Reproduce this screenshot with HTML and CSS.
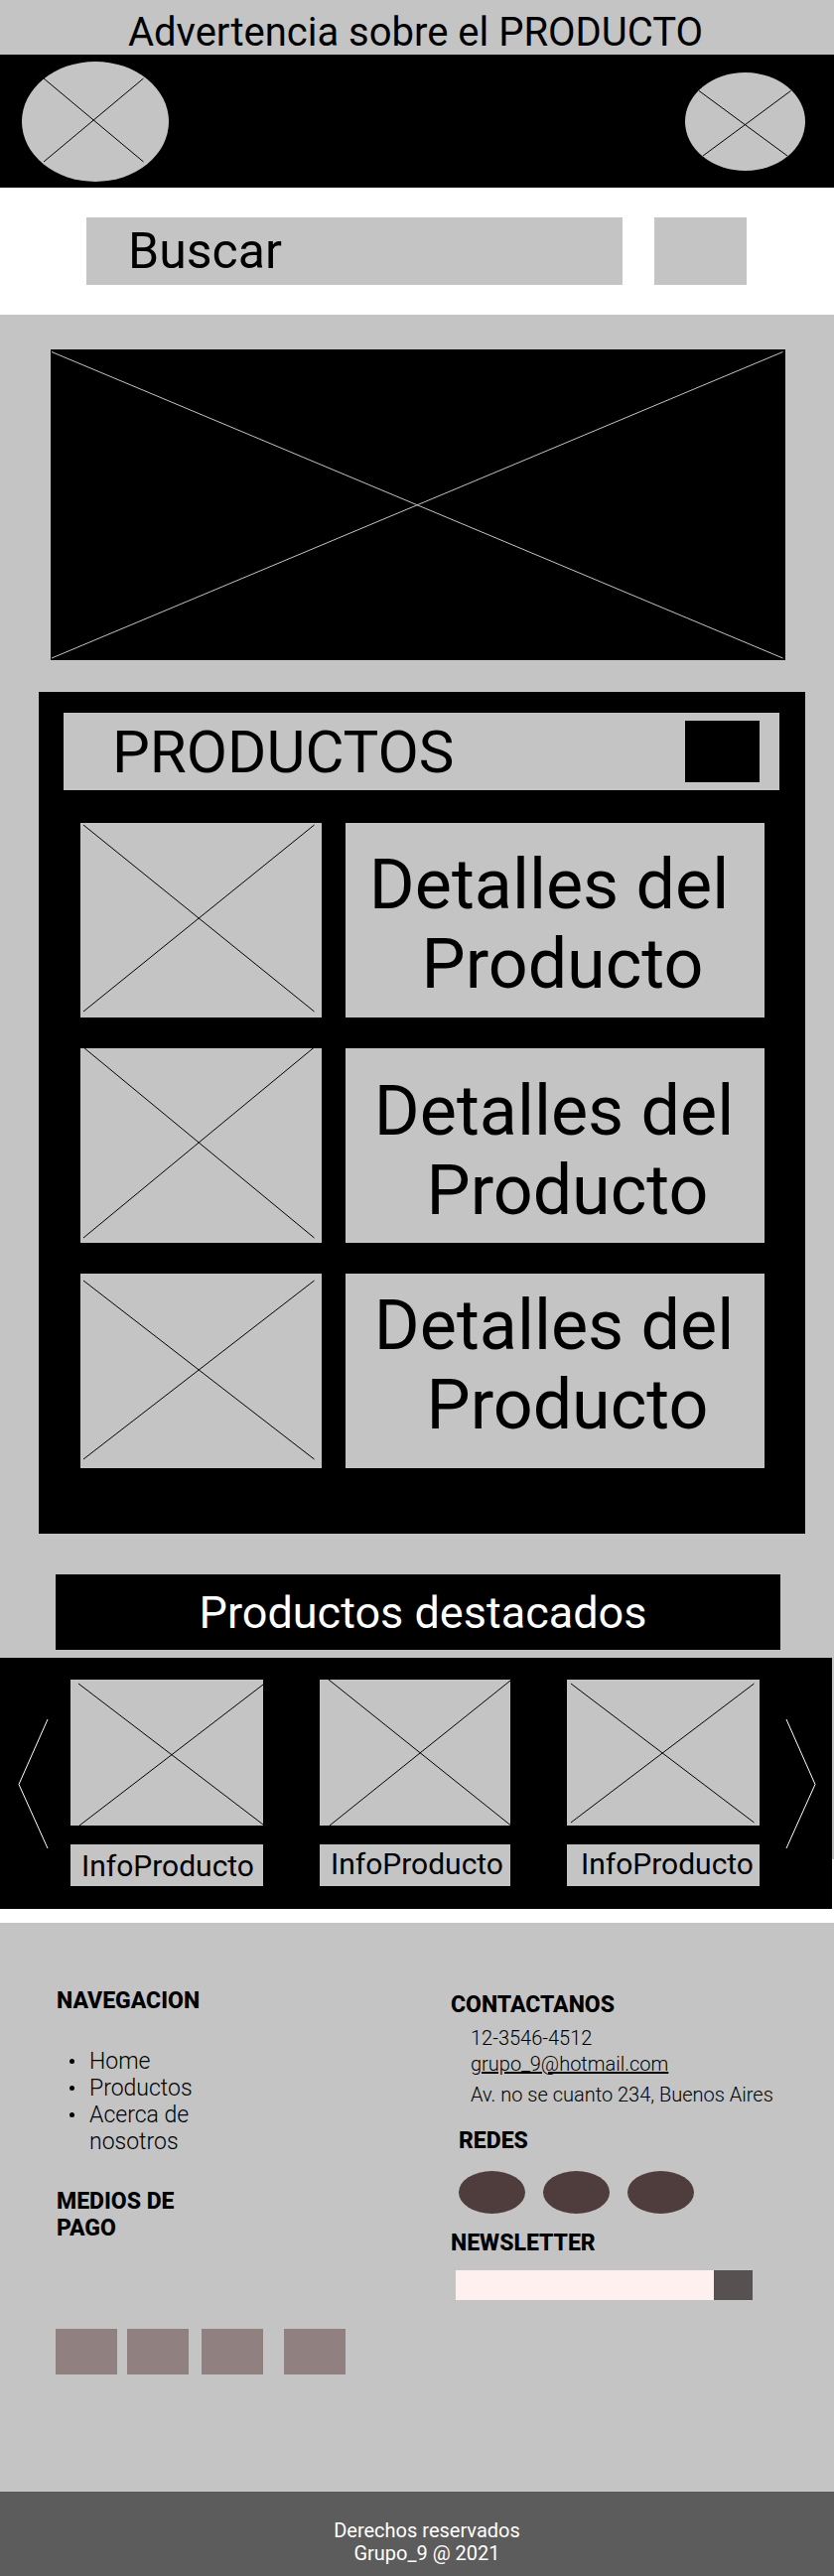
FILE: index.html
```html
<!DOCTYPE html>
<html lang="es">
<head>
<meta charset="utf-8">
<meta name="viewport" content="width=device-width, initial-scale=1">
<title>Grupo_9</title>
<link rel="stylesheet" href="styles.css">
</head>
<body>
<p class="notice">Advertencia sobre el PRODUCTO</p>

<header class="header">
  <svg class="logo" viewBox="0 0 148 121" role="img" aria-label="Logo">
    <ellipse cx="74" cy="60.5" rx="74" ry="60.5"/>
    <path d="M22 17L122.500 101M122.500 17L22 101"/>
  </svg>
  <svg class="avatar" viewBox="0 0 121 99" role="img" aria-label="Usuario">
    <ellipse cx="60.500" cy="49.500" rx="60.500" ry="49.500"/>
    <path d="M14 18.500L103 84M106.500 18.500L18 84"/>
  </svg>
</header>

<form class="search">
  <input class="search-input" type="text" placeholder="Buscar" aria-label="Buscar">
  <button class="search-button" type="button" aria-label="Buscar"></button>
</form>

<main class="main">
  <svg class="banner" viewBox="0 0 740 313" preserveAspectRatio="none" role="img" aria-label="Banner">
    <path d="M1 2.500L737.500 311M737.500 2.500L1 311"/>
  </svg>

  <section class="panel">
    <div class="panel-head">
      <h1 class="panel-title">PRODUCTOS</h1>
      <button class="panel-button" type="button" aria-label="Filtrar"></button>
    </div>
    <div class="products">
      <article class="product">
        <svg class="picture" viewBox="0 0 243 196" preserveAspectRatio="none" aria-hidden="true"><path d="M3 2L235.500 190M235.500 2L3 190"/></svg>
        <p class="details">Detalles del <span class="details-end">Producto</span></p>
      </article>
      <article class="product">
        <svg class="picture" viewBox="0 0 243 196" preserveAspectRatio="none" aria-hidden="true"><path d="M3 -1L235.500 191M235.500 -1L3 191"/></svg>
        <p class="details details-shifted">Detalles del <span class="details-end">Producto</span></p>
      </article>
      <article class="product">
        <svg class="picture" viewBox="0 0 243 196" preserveAspectRatio="none" aria-hidden="true"><path d="M3 7L235.500 187M235.500 7L3 187"/></svg>
        <p class="details details-shifted details-high">Detalles del <span class="details-end">Producto</span></p>
      </article>
    </div>
  </section>

  <h2 class="featured-title">Productos destacados</h2>
</main>

<section class="featured">
  <div class="carousel">
    <button class="arrow" type="button" aria-label="Anterior"><svg viewBox="0 0 31 132"><path d="M30 1L1 66.500L30 131"/></svg></button>
    <div class="cards">
      <article class="card">
        <svg class="card-picture" viewBox="0 0 194 147" preserveAspectRatio="none" aria-hidden="true"><path d="M8 4L194 146M194 5L9 147"/></svg>
        <p class="card-label card-label-low">InfoProducto</p>
      </article>
      <article class="card">
        <svg class="card-picture" viewBox="0 0 192 147" preserveAspectRatio="none" aria-hidden="true"><path d="M9 0L192 146.500M192 1L10 147"/></svg>
        <p class="card-label">InfoProducto</p>
      </article>
      <article class="card">
        <svg class="card-picture" viewBox="0 0 194 147" preserveAspectRatio="none" aria-hidden="true"><path d="M4 4L188.500 144M188.500 4L4 144"/></svg>
        <p class="card-label card-label-inset">InfoProducto</p>
      </article>
    </div>
    <button class="arrow" type="button" aria-label="Siguiente"><svg viewBox="0 0 31 132"><path d="M1 1L30 66.500L1 131"/></svg></button>
  </div>
</section>

<footer>
  <div class="footer">
    <div class="footer-left">
      <h3 class="footer-heading">NAVEGACION</h3>
      <ul class="nav">
        <li><a href="#">Home</a></li>
        <li><a href="#">Productos</a></li>
        <li><a href="#">Acerca de nosotros</a></li>
      </ul>
      <h3 class="footer-heading">MEDIOS DE PAGO</h3>
      <div class="payments"><span></span><span></span><span></span><span></span></div>
    </div>
    <div class="footer-right">
      <h3 class="footer-heading">CONTACTANOS</h3>
      <address class="contact">
        <p>12-3546-4512</p>
        <p><a href="mailto:grupo_9@hotmail.com">grupo_9@hotmail.com</a></p>
        <p class="street">Av. no se cuanto 234, Buenos Aires</p>
      </address>
      <h3 class="footer-heading social-heading">REDES</h3>
      <div class="social">
        <a href="#" aria-label="Red social 1"></a>
        <a href="#" aria-label="Red social 2"></a>
        <a href="#" aria-label="Red social 3"></a>
      </div>
      <h3 class="footer-heading"><label for="newsletter">NEWSLETTER</label></h3>
      <form class="newsletter">
        <input id="newsletter" type="email">
        <button type="button" aria-label="Enviar"></button>
      </form>
    </div>
  </div>
  <p class="copyright">Derechos reservados<br>Grupo_9 @ 2021</p>
</footer>
</body>
</html>
```

FILE: styles.css
```css
* {
  box-sizing: border-box;
}

body,
h1,
h2,
h3,
p,
ul {
  margin: 0;
  padding: 0;
}

body {
  background: #fff;
  color: #000;
  font-family: Roboto, "Liberation Sans", sans-serif;
}

button,
input {
  border: 0;
  border-radius: 0;
  padding: 0;
  font: inherit;
}

svg {
  display: block;
}

svg path {
  fill: none;
  stroke: #000;
  stroke-width: 1;
  vector-effect: non-scaling-stroke;
}

.notice {
  padding: 10px 3px 0 0;
  background: #c4c4c4;
  font-size: 40px;
  line-height: 45px;
  text-align: center;
}

.header {
  display: flex;
  align-items: center;
  justify-content: space-between;
  padding: 7px 29px 6px 22px;
  background: #000;
}

.header ellipse {
  fill: #c4c4c4;
}

.logo {
  width: 148px;
  height: 121px;
}

.avatar {
  width: 121px;
  height: 99px;
}

.search {
  display: flex;
  gap: 32px;
  padding: 30px 88px 30px 87px;
}

.search-input {
  flex: 1;
  min-width: 0;
  height: 68px;
  padding: 0 42px;
  background: #c4c4c4;
  font-size: 50px;
}

.search-input::placeholder {
  color: #000;
  opacity: 1;
}

.search-button {
  width: 93px;
  background: #c4c4c4;
}

.main {
  padding: 35px 29px 8px 39px;
  background: #c4c4c4;
}

.banner {
  width: calc(100% - 32px);
  height: 313px;
  margin: 0 20px 32px 12px;
  background: #000;
}

.banner path {
  stroke: #c4c4c4;
}

.panel {
  padding: 21px 26px 66px 25px;
  background: #000;
}

.panel-head {
  display: flex;
  align-items: center;
  justify-content: space-between;
  padding: 8px 20px 8px 49px;
  background: #c4c4c4;
}

.panel-title {
  padding-top: 2px;
  font-size: 60px;
  font-weight: 400;
  line-height: 60px;
}

.panel-button {
  width: 75px;
  height: 62px;
  background: #000;
}

.products {
  display: grid;
  gap: 31px;
  padding: 33px 15px 0 17px;
}

.product {
  display: grid;
  grid-template-columns: 243fr 422fr;
  gap: 24px;
}

.picture {
  width: 100%;
  height: 196px;
  background: #c4c4c4;
}

.details {
  padding: 22px 12px 0 0;
  background: #c4c4c4;
  font-size: 70px;
  line-height: 80px;
  text-align: center;
}

.details-end {
  display: block;
  padding-left: 27px;
}

.details-shifted {
  padding-top: 23px;
  padding-right: 2px;
}

.details-high {
  padding-top: 12px;
}

.featured-title {
  margin: 41px 25px 0 17px;
  padding: 2px 0 0 10px;
  background: #000;
  color: #fff;
  font-size: 45px;
  font-weight: 400;
  line-height: 74px;
  text-align: center;
}

.featured {
  padding: 0 2px 14px 0;
  background: linear-gradient(#c4c4c4 203px, #fff 203px);
}

.carousel {
  display: flex;
  gap: 22px;
  padding: 22px 16px 23px 18px;
  background: #000;
}

.arrow {
  display: flex;
  align-items: flex-start;
  width: 31px;
  padding-top: 39px;
  background: none;
}

.arrow svg {
  width: 31px;
  height: 132px;
}

.arrow path {
  stroke: #fff;
}

.cards {
  display: grid;
  flex: 1;
  grid-template-columns: 194fr 192fr 194fr;
  gap: 57px;
  padding-right: 4px;
}

.card-picture {
  width: 100%;
  height: 147px;
  margin-bottom: 19px;
  background: #c4c4c4;
}

.card-label {
  height: 42px;
  padding-left: 11px;
  background: #c4c4c4;
  font-size: 30px;
  line-height: 40px;
}

.card-label-low {
  line-height: 44px;
}

.card-label-inset {
  padding-left: 14px;
}

.footer {
  display: flex;
  min-height: 573px;
  padding-left: 56px;
  background: #c4c4c4;
}

.footer-left {
  flex: 0 0 398px;
  padding-top: 65px;
}

.footer-right {
  flex: 1;
  padding-top: 69px;
}

.footer-heading {
  font-size: 23px;
  font-weight: 800;
  line-height: 27px;
}

.footer-left .footer-heading {
  width: 150px;
  padding-left: 1px;
}

.nav {
  width: 160px;
  margin: 34px 0 33px;
  padding-left: 14px;
  font-size: 23px;
  font-weight: 300;
  line-height: 27px;
  list-style: none;
}

.nav li {
  display: grid;
  grid-template-columns: 20px 1fr;
}

.nav li::before {
  width: 5px;
  height: 5px;
  margin-top: 11px;
  border-radius: 50%;
  background: #000;
  content: "";
}

.nav a {
  color: inherit;
  text-decoration: none;
}

.payments {
  display: flex;
  gap: 13px;
  margin-top: 88px;
}

.payments span {
  width: 62px;
  height: 46px;
  background: #908080;
}

.payments span:first-child {
  margin-right: -3px;
}

.payments span:last-child {
  margin-left: 8px;
}

.contact {
  margin-top: 7px;
  padding-left: 20px;
  font-size: 20px;
  font-style: normal;
  font-weight: 300;
  line-height: 26px;
}

.contact a {
  color: inherit;
}

.street {
  margin-top: 5px;
}

.social-heading {
  margin-top: 20px;
  padding-left: 8px;
}

.social {
  display: flex;
  gap: 18px;
  margin: 17px 0 16px 8px;
}

.social a {
  width: 67px;
  height: 43px;
  border-radius: 50%;
  background: #4f3d3d;
}

.newsletter {
  display: flex;
  margin: 14px 82px 0 5px;
}

.newsletter input {
  flex: 1;
  min-width: 0;
  height: 30px;
  background: #fff0f0;
}

.newsletter button {
  width: 39px;
  background: #575151;
}

.copyright {
  padding: 28px 0 11px 20px;
  background: #5c5c5c;
  color: #fff;
  font-size: 20px;
  line-height: 23px;
  text-align: center;
}
```
